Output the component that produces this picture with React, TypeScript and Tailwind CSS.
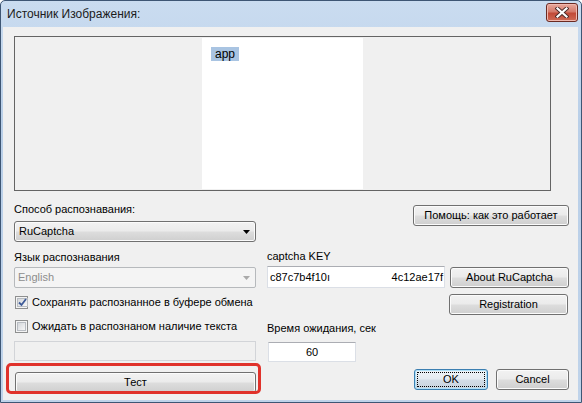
import React from 'react';

const face = "font-['Liberation_Sans',Arial,sans-serif] text-[11px] leading-[13px]";
const ui = `${face} text-black`;

const Btn = ({ children, className = '' }: { children: React.ReactNode; className?: string }) => (
  <button
    className={`h-[21px] rounded-[3px] border border-[#707070] bg-[linear-gradient(#f2f2f2_0%,#ebebeb_48%,#dddddd_52%,#cfcfcf_100%)] shadow-[inset_0_0_0_1px_#fbfbfb] ${ui} ${className}`}
  >
    {children}
  </button>
);

const CheckBox = ({ checked }: { checked?: boolean }) => (
  <span className="flex h-[13px] w-[13px] shrink-0 border border-[#8e8f8f] bg-[#f4f4f4] p-px">
    <span className="flex flex-1 items-center justify-center border border-[#b8bcc2] bg-[linear-gradient(135deg,#d4d7db,#f7f7f7)]">
      {checked && (
        <svg width="9" height="9" viewBox="0 0 9 9">
          <path d="M1 4.5 L3.5 7 L8 1" fill="none" stroke="#3d5a98" strokeWidth="1.8" />
        </svg>
      )}
    </span>
  </span>
);

export default function App() {
  return (
    <div className="flex h-[403px] w-[582px] flex-col rounded-t-[5px] border border-[#3e5674] bg-[linear-gradient(#cadcf0,#b9cfe8_30%,#bfd3ea)]">
      {/* title bar */}
      <div className="flex h-[26px] shrink-0 items-start justify-between pl-[6px] pr-[3px]">
        <span className="mt-[6px] font-['Liberation_Sans',Arial,sans-serif] text-[12px] leading-[15px] text-[#1b1b1b]">
          Источник Изображения:
        </span>
        <div className="mt-[2px] flex h-[19px] w-[32px] items-center justify-center rounded-[3px] border border-[#6b2a22] bg-[linear-gradient(#e9a99d,#d47a6b_45%,#c24a37_55%,#cf6a55)] shadow-[inset_0_0_0_1px_#f0b8ae]">
          <svg width="14" height="11" viewBox="0 0 14 11">
            <path d="M2.5 1.5 L11.5 9.5 M11.5 1.5 L2.5 9.5" stroke="#4a2a28" strokeWidth="4" strokeLinecap="square" />
            <path d="M2.5 1.5 L11.5 9.5 M11.5 1.5 L2.5 9.5" stroke="#ffffff" strokeWidth="2.2" strokeLinecap="square" />
          </svg>
        </div>
      </div>

      {/* client area */}
      <div className="mb-[2px] ml-[2px] mr-[3px] flex flex-1 flex-col bg-[#f0f0f0] pl-[11px] pt-[9px]">
        {/* image panel */}
        <div className="flex h-[155px] w-[537px] border border-[#646464] bg-[#f0f0f0] py-px pl-[187px]">
          <div className="flex w-[161px] items-start bg-white pl-[9px] pt-[9px]">
            <span className="block h-[14px] bg-[#a9c4e2] px-[4px] font-['Liberation_Sans',Arial,sans-serif] text-[12px] leading-[14px] text-black">
              app
            </span>
          </div>
        </div>

        <div className="flex">
          {/* left column */}
          <div className="flex w-[242px] flex-col">
            <span className={`mt-[12px] ${ui}`}>Способ распознавания:</span>
            <Btn className="mt-[5px] flex items-center justify-between pl-[4px] pr-[5px]">
              <span>RuCaptcha</span>
              <svg width="7" height="4" viewBox="0 0 7 4">
                <path d="M0 0 H7 L3.5 4 Z" fill="#000" />
              </svg>
            </Btn>
            <span className={`mt-[9px] ${ui}`}>Язык распознавания</span>
            <div className="mt-[3px] flex h-[21px] items-center justify-between rounded-[2px] border border-[#b6b9bc] bg-[#f4f4f4] pl-[3px] pr-[5px]">
              <span className={`${face} text-[#8d8d8d]`}>English</span>
              <svg width="7" height="4" viewBox="0 0 7 4">
                <path d="M0 0 H7 L3.5 4 Z" fill="#a9a9a9" />
              </svg>
            </div>
            <div className="mt-[7px] flex h-[15px] items-center gap-[4px] pl-px">
              <CheckBox checked />
              <span className={ui}>Сохранять распознанное в буфере обмена</span>
            </div>
            <div className="mt-[9px] flex h-[15px] items-center gap-[4px] pl-px">
              <CheckBox />
              <span className={ui}>Ожидать в распознаном наличие текста</span>
            </div>
            <div className="mt-[7px] h-[20px] border border-[#d2d4d8] bg-[#f0f0f0]" />
            <div className="relative mt-[7px] pl-px">
              <Btn className="w-[241px]">Тест</Btn>
              <div className="pointer-events-none absolute -left-[8px] -top-[5px] h-[31px] w-[255px] rounded-[5px] border-[3px] border-[#e0322b]" />
            </div>
          </div>

          {/* right column */}
          <div className="ml-[11px] flex w-[302px] flex-col">
            <Btn className="mt-[14px] w-[156px] self-end">Помощь: как это работает</Btn>
            <span className={`mt-[24px] ${ui}`}>captcha KEY</span>
            <div className="mt-[3px] flex items-center gap-[5px]">
              <div className="flex h-[22px] w-[178px] items-center justify-between overflow-hidden border border-[#dbdfe6] border-t-[#abadb3] bg-white pl-[2px] pr-px">
                <span className={`whitespace-nowrap ${ui}`}>c87c7b4f10ı</span>
                <span className={`whitespace-nowrap ${ui}`}>4c12ae17f</span>
              </div>
              <Btn className="w-[119px]">About RuCaptcha</Btn>
            </div>
            <Btn className="mr-px mt-[6px] w-[119px] self-end">Registration</Btn>
            <span className={`mt-[7px] ${ui}`}>Время ожидания, сек</span>
            <div className={`ml-px mt-[7px] flex h-[20px] w-[88px] items-center justify-center border border-[#dbdfe6] border-t-[#abadb3] bg-white ${ui}`}>
              60
            </div>
            <div className="mt-[7px] flex justify-end gap-[8px]">
              <button
                className={`flex h-[21px] w-[74px] items-center justify-center rounded-[3px] border border-[#3c7fb1] bg-[linear-gradient(#eef3f7_0%,#e4ebf1_48%,#d3dde7_52%,#c8d3de_100%)] p-[2px] shadow-[inset_0_0_0_1px_#aee0f8] ${ui}`}
              >
                <span className="flex h-full w-full items-center justify-center border border-dotted border-black">OK</span>
              </button>
              <Btn className="w-[73px]">Cancel</Btn>
            </div>
          </div>
        </div>
      </div>
    </div>
  );
}
